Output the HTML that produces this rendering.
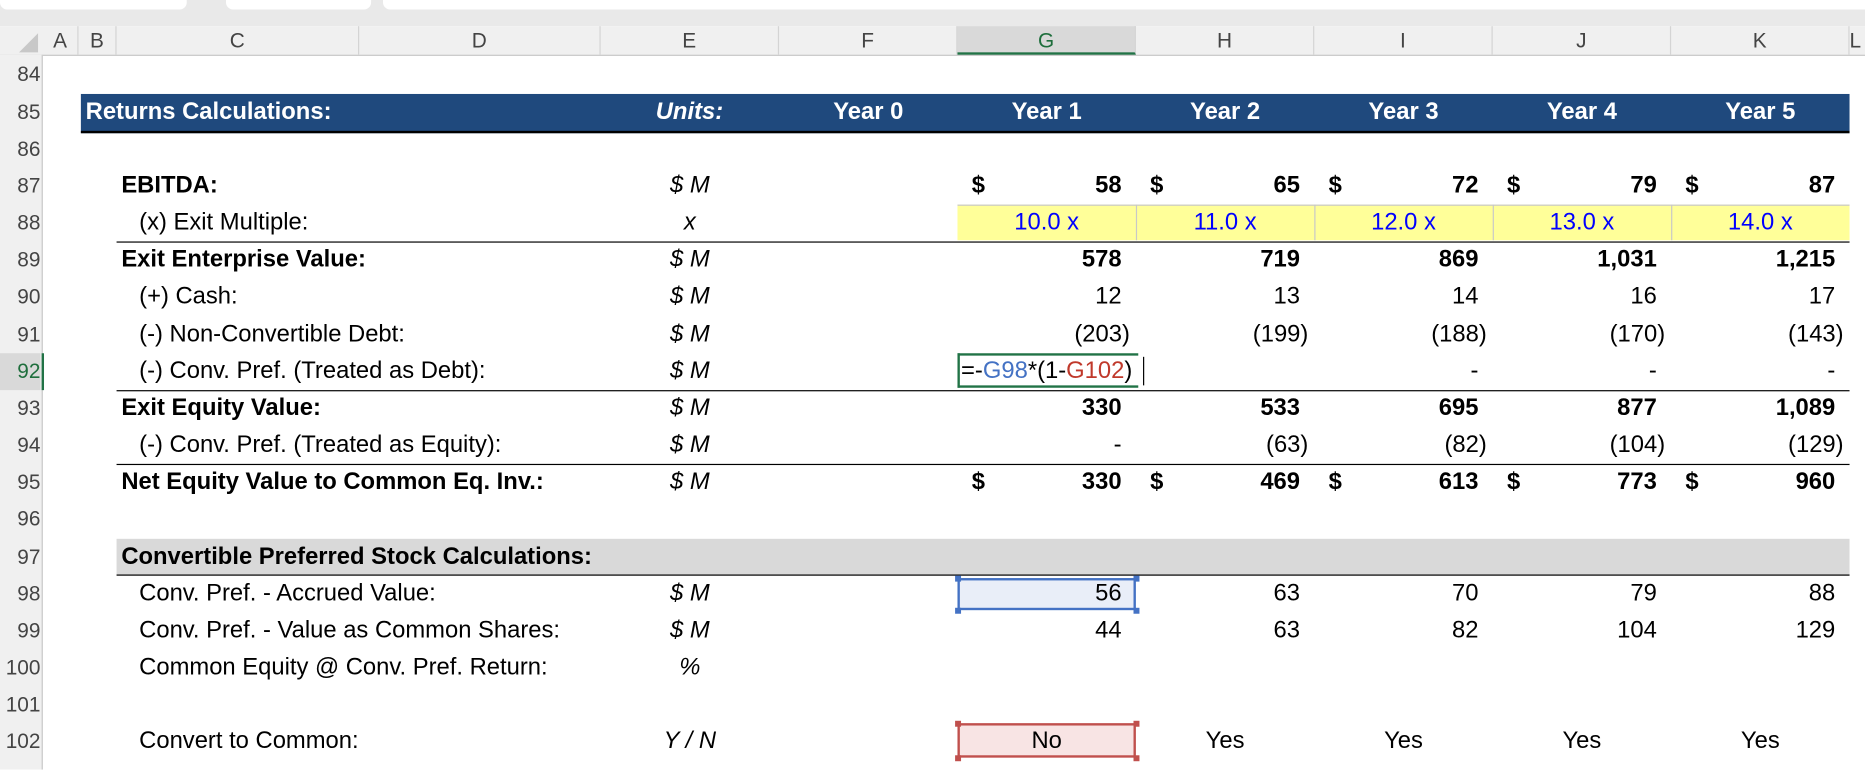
<!DOCTYPE html>
<html><head><meta charset="utf-8"><style>
html,body{margin:0;padding:0;background:#fff;overflow:hidden;width:1865px;height:769px}
#w{position:absolute;left:0;top:0;width:1568px;height:647px;transform:scale(1.18941);transform-origin:0 0;font-family:"Liberation Sans",Arial,sans-serif;font-size:20px;color:#000}
.a{position:absolute;height:31px;line-height:31px;white-space:nowrap}
.b{font-weight:bold}
.i{font-style:italic}
.rh{position:absolute;left:0;width:34px;text-align:right;color:#444;font-size:17.5px;height:31px;line-height:31px}
.ch{position:absolute;top:22px;height:24px;line-height:24px;text-align:center;color:#444;font-size:17.5px;border-right:1px solid #d4d4d4}
.ln{position:absolute;height:1px;background:#000}
.h{position:absolute;width:5px;height:5px}
</style></head><body><div id="w">
<div style="position:absolute;left:0;top:0;width:1568px;height:22px;background:#e9e9e9"></div>
<div style="position:absolute;left:0;top:0;width:157px;height:8px;background:#fff;border-radius:0 0 6px 6px"></div>
<div style="position:absolute;left:190px;top:0;width:122px;height:8px;background:#fff;border-radius:0 0 6px 6px"></div>
<div style="position:absolute;left:322px;top:0;width:1246px;height:8px;background:#fff;border-radius:0 0 0 6px"></div>
<div style="position:absolute;left:0;top:22px;width:1568px;height:24px;background:#f0f0f0;border-bottom:1px solid #c8c8c8"></div>
<div style="position:absolute;left:0;top:46px;width:35px;height:601px;background:#f0f0f0;border-right:1px solid #c8c8c8"></div>
<div style="position:absolute;left:16px;top:28px;width:0;height:0;border-left:16px solid transparent;border-bottom:16px solid #c8c8c8"></div>
<div class="ch" style="left:36px;width:29px">A</div>
<div class="ch" style="left:66px;width:31px">B</div>
<div class="ch" style="left:98px;width:203px">C</div>
<div class="ch" style="left:302px;width:202px">D</div>
<div class="ch" style="left:505px;width:149px">E</div>
<div class="ch" style="left:655px;width:149px">F</div>
<div class="ch" style="left:805px;width:149px;background:#d9d9d9;color:#1e6e3c;border-bottom:2px solid #217346;height:22px;line-height:24px">G</div>
<div class="ch" style="left:955px;width:149px">H</div>
<div class="ch" style="left:1105px;width:149px">I</div>
<div class="ch" style="left:1255px;width:149px">J</div>
<div class="ch" style="left:1405px;width:149px">K</div>
<div class="ch" style="left:1555px;width:20px;text-align:left">L</div>
<div class="rh" style="top:47px">84</div><div class="rh" style="top:79px">85</div><div class="rh" style="top:110px">86</div><div class="rh" style="top:141px">87</div><div class="rh" style="top:172px">88</div><div class="rh" style="top:203px">89</div><div class="rh" style="top:234px">90</div><div class="rh" style="top:266px">91</div><div class="rh" style="top:297px;color:#1e6e3c;background:#d9d9d9">92</div><div class="rh" style="top:328px">93</div><div class="rh" style="top:359px">94</div><div class="rh" style="top:390px">95</div><div class="rh" style="top:421px">96</div><div class="rh" style="top:453px">97</div><div class="rh" style="top:484px">98</div><div class="rh" style="top:515px">99</div><div class="rh" style="top:546px">100</div><div class="rh" style="top:577px">101</div><div class="rh" style="top:608px">102</div>
<div style="position:absolute;left:35px;top:297px;width:2px;height:31px;background:#217346"></div>
<div style="position:absolute;left:68px;top:79px;width:1487px;height:31px;background:#1f497d;border-bottom:2px solid #000"></div>
<div style="position:absolute;left:98px;top:453px;width:1457px;height:30px;background:#d9d9d9;border-bottom:1px solid #000"></div>
<div class="ln" style="left:98px;top:203px;width:1457px"></div>
<div class="ln" style="left:98px;top:328px;width:1457px"></div>
<div class="ln" style="left:98px;top:390px;width:1457px"></div>
<div style="position:absolute;left:805px;top:172px;width:750px;height:30px;background:#ffff99"></div>
<div style="position:absolute;left:955px;top:172px;width:1px;height:30px;background:#c8c8c8"></div>
<div style="position:absolute;left:1105px;top:172px;width:1px;height:30px;background:#c8c8c8"></div>
<div style="position:absolute;left:1255px;top:172px;width:1px;height:30px;background:#c8c8c8"></div>
<div style="position:absolute;left:1405px;top:172px;width:1px;height:30px;background:#c8c8c8"></div>
<div style="position:absolute;left:805px;top:172px;width:750px;height:1px;background:#c8c8c8"></div>
<div class="a b" style="left:72px;top:79px;color:#fff">Returns Calculations:</div>
<div class="a b i" style="left:505px;width:103px;text-align:right;top:79px;color:#fff">Units:</div>
<div class="a b" style="left:655px;width:150px;text-align:center;top:79px;color:#fff">Year 0</div>
<div class="a b" style="left:805px;width:150px;text-align:center;top:79px;color:#fff">Year 1</div>
<div class="a b" style="left:955px;width:150px;text-align:center;top:79px;color:#fff">Year 2</div>
<div class="a b" style="left:1105px;width:150px;text-align:center;top:79px;color:#fff">Year 3</div>
<div class="a b" style="left:1255px;width:150px;text-align:center;top:79px;color:#fff">Year 4</div>
<div class="a b" style="left:1405px;width:150px;text-align:center;top:79px;color:#fff">Year 5</div>
<div class="a b" style="left:102px;top:141px">EBITDA:</div>
<div class="a" style="left:117px;top:172px">(x) Exit Multiple:</div>
<div class="a b" style="left:102px;top:203px">Exit Enterprise Value:</div>
<div class="a" style="left:117px;top:234px">(+) Cash:</div>
<div class="a" style="left:117px;top:266px">(-) Non-Convertible Debt:</div>
<div class="a" style="left:117px;top:297px">(-) Conv. Pref. (Treated as Debt):</div>
<div class="a b" style="left:102px;top:328px">Exit Equity Value:</div>
<div class="a" style="left:117px;top:359px">(-) Conv. Pref. (Treated as Equity):</div>
<div class="a b" style="left:102px;top:390px">Net Equity Value to Common Eq. Inv.:</div>
<div class="a b" style="left:102px;top:453px">Convertible Preferred Stock Calculations:</div>
<div class="a" style="left:117px;top:484px">Conv. Pref. - Accrued Value:</div>
<div class="a" style="left:117px;top:515px">Conv. Pref. - Value as Common Shares:</div>
<div class="a" style="left:117px;top:546px">Common Equity @ Conv. Pref. Return:</div>
<div class="a" style="left:117px;top:608px">Convert to Common:</div>
<div class="a i" style="left:505px;width:150px;text-align:center;top:141px">$ M</div>
<div class="a i" style="left:505px;width:150px;text-align:center;top:172px">x</div>
<div class="a i" style="left:505px;width:150px;text-align:center;top:203px">$ M</div>
<div class="a i" style="left:505px;width:150px;text-align:center;top:234px">$ M</div>
<div class="a i" style="left:505px;width:150px;text-align:center;top:266px">$ M</div>
<div class="a i" style="left:505px;width:150px;text-align:center;top:297px">$ M</div>
<div class="a i" style="left:505px;width:150px;text-align:center;top:328px">$ M</div>
<div class="a i" style="left:505px;width:150px;text-align:center;top:359px">$ M</div>
<div class="a i" style="left:505px;width:150px;text-align:center;top:390px">$ M</div>
<div class="a i" style="left:505px;width:150px;text-align:center;top:484px">$ M</div>
<div class="a i" style="left:505px;width:150px;text-align:center;top:515px">$ M</div>
<div class="a i" style="left:505px;width:150px;text-align:center;top:546px">%</div>
<div class="a i" style="left:505px;width:150px;text-align:center;top:608px">Y / N</div>
<div class="a b" style="left:817px;top:141px">$</div><div class="a b" style="left:967px;top:141px">$</div><div class="a b" style="left:1117px;top:141px">$</div><div class="a b" style="left:1267px;top:141px">$</div><div class="a b" style="left:1417px;top:141px">$</div>
<div class="a b" style="left:805px;width:138px;text-align:right;top:141px">58</div>
<div class="a b" style="left:955px;width:138px;text-align:right;top:141px">65</div>
<div class="a b" style="left:1105px;width:138px;text-align:right;top:141px">72</div>
<div class="a b" style="left:1255px;width:138px;text-align:right;top:141px">79</div>
<div class="a b" style="left:1405px;width:138px;text-align:right;top:141px">87</div>
<div class="a" style="left:805px;width:150px;text-align:center;top:172px;color:#0000ff">10.0 x</div>
<div class="a" style="left:955px;width:150px;text-align:center;top:172px;color:#0000ff">11.0 x</div>
<div class="a" style="left:1105px;width:150px;text-align:center;top:172px;color:#0000ff">12.0 x</div>
<div class="a" style="left:1255px;width:150px;text-align:center;top:172px;color:#0000ff">13.0 x</div>
<div class="a" style="left:1405px;width:150px;text-align:center;top:172px;color:#0000ff">14.0 x</div>
<div class="a b" style="left:805px;width:138px;text-align:right;top:203px">578</div>
<div class="a b" style="left:955px;width:138px;text-align:right;top:203px">719</div>
<div class="a b" style="left:1105px;width:138px;text-align:right;top:203px">869</div>
<div class="a b" style="left:1255px;width:138px;text-align:right;top:203px">1,031</div>
<div class="a b" style="left:1405px;width:138px;text-align:right;top:203px">1,215</div>
<div class="a" style="left:805px;width:138px;text-align:right;top:234px">12</div>
<div class="a" style="left:955px;width:138px;text-align:right;top:234px">13</div>
<div class="a" style="left:1105px;width:138px;text-align:right;top:234px">14</div>
<div class="a" style="left:1255px;width:138px;text-align:right;top:234px">16</div>
<div class="a" style="left:1405px;width:138px;text-align:right;top:234px">17</div>
<div class="a" style="left:805px;width:145px;text-align:right;top:266px">(203)</div>
<div class="a" style="left:955px;width:145px;text-align:right;top:266px">(199)</div>
<div class="a" style="left:1105px;width:145px;text-align:right;top:266px">(188)</div>
<div class="a" style="left:1255px;width:145px;text-align:right;top:266px">(170)</div>
<div class="a" style="left:1405px;width:145px;text-align:right;top:266px">(143)</div>
<div style="position:absolute;left:805px;top:297px;width:152px;height:29px;border:2px solid #217346;border-right:none;box-sizing:border-box"></div>
<div class="a" style="left:808px;top:297px">=-<span style="color:#4472c4">G98</span>*(1-<span style="color:#c0392b">G102</span>)</div>
<div style="position:absolute;left:961px;top:300px;width:1px;height:24px;background:#000"></div>
<div class="a" style="left:1105px;width:138px;text-align:right;top:297px">-</div>
<div class="a" style="left:1255px;width:138px;text-align:right;top:297px">-</div>
<div class="a" style="left:1405px;width:138px;text-align:right;top:297px">-</div>
<div class="a b" style="left:805px;width:138px;text-align:right;top:328px">330</div>
<div class="a b" style="left:955px;width:138px;text-align:right;top:328px">533</div>
<div class="a b" style="left:1105px;width:138px;text-align:right;top:328px">695</div>
<div class="a b" style="left:1255px;width:138px;text-align:right;top:328px">877</div>
<div class="a b" style="left:1405px;width:138px;text-align:right;top:328px">1,089</div>
<div class="a" style="left:805px;width:138px;text-align:right;top:359px">-</div>
<div class="a" style="left:955px;width:145px;text-align:right;top:359px">(63)</div>
<div class="a" style="left:1105px;width:145px;text-align:right;top:359px">(82)</div>
<div class="a" style="left:1255px;width:145px;text-align:right;top:359px">(104)</div>
<div class="a" style="left:1405px;width:145px;text-align:right;top:359px">(129)</div>
<div class="a b" style="left:817px;top:390px">$</div><div class="a b" style="left:967px;top:390px">$</div><div class="a b" style="left:1117px;top:390px">$</div><div class="a b" style="left:1267px;top:390px">$</div><div class="a b" style="left:1417px;top:390px">$</div>
<div class="a b" style="left:805px;width:138px;text-align:right;top:390px">330</div>
<div class="a b" style="left:955px;width:138px;text-align:right;top:390px">469</div>
<div class="a b" style="left:1105px;width:138px;text-align:right;top:390px">613</div>
<div class="a b" style="left:1255px;width:138px;text-align:right;top:390px">773</div>
<div class="a b" style="left:1405px;width:138px;text-align:right;top:390px">960</div>
<div style="position:absolute;left:805px;top:486px;width:150px;height:27px;background:#e9eef8;border:2px solid #4472c4;box-sizing:border-box"></div>
<div class="h" style="left:803px;top:484px;background:#4472c4"></div><div class="h" style="left:953px;top:484px;background:#4472c4"></div><div class="h" style="left:803px;top:511px;background:#4472c4"></div><div class="h" style="left:953px;top:511px;background:#4472c4"></div>
<div class="a" style="left:805px;width:138px;text-align:right;top:484px">56</div>
<div class="a" style="left:955px;width:138px;text-align:right;top:484px">63</div>
<div class="a" style="left:1105px;width:138px;text-align:right;top:484px">70</div>
<div class="a" style="left:1255px;width:138px;text-align:right;top:484px">79</div>
<div class="a" style="left:1405px;width:138px;text-align:right;top:484px">88</div>
<div class="a" style="left:805px;width:138px;text-align:right;top:515px">44</div>
<div class="a" style="left:955px;width:138px;text-align:right;top:515px">63</div>
<div class="a" style="left:1105px;width:138px;text-align:right;top:515px">82</div>
<div class="a" style="left:1255px;width:138px;text-align:right;top:515px">104</div>
<div class="a" style="left:1405px;width:138px;text-align:right;top:515px">129</div>
<div style="position:absolute;left:805px;top:608px;width:150px;height:29px;background:#f8e4e4;border:2px solid #c0504d;box-sizing:border-box"></div>
<div class="h" style="left:803px;top:606px;background:#c0504d"></div><div class="h" style="left:953px;top:606px;background:#c0504d"></div><div class="h" style="left:803px;top:635px;background:#c0504d"></div><div class="h" style="left:953px;top:635px;background:#c0504d"></div>
<div class="a" style="left:805px;width:150px;text-align:center;top:608px">No</div>
<div class="a" style="left:955px;width:150px;text-align:center;top:608px">Yes</div>
<div class="a" style="left:1105px;width:150px;text-align:center;top:608px">Yes</div>
<div class="a" style="left:1255px;width:150px;text-align:center;top:608px">Yes</div>
<div class="a" style="left:1405px;width:150px;text-align:center;top:608px">Yes</div>
</div></body></html>
